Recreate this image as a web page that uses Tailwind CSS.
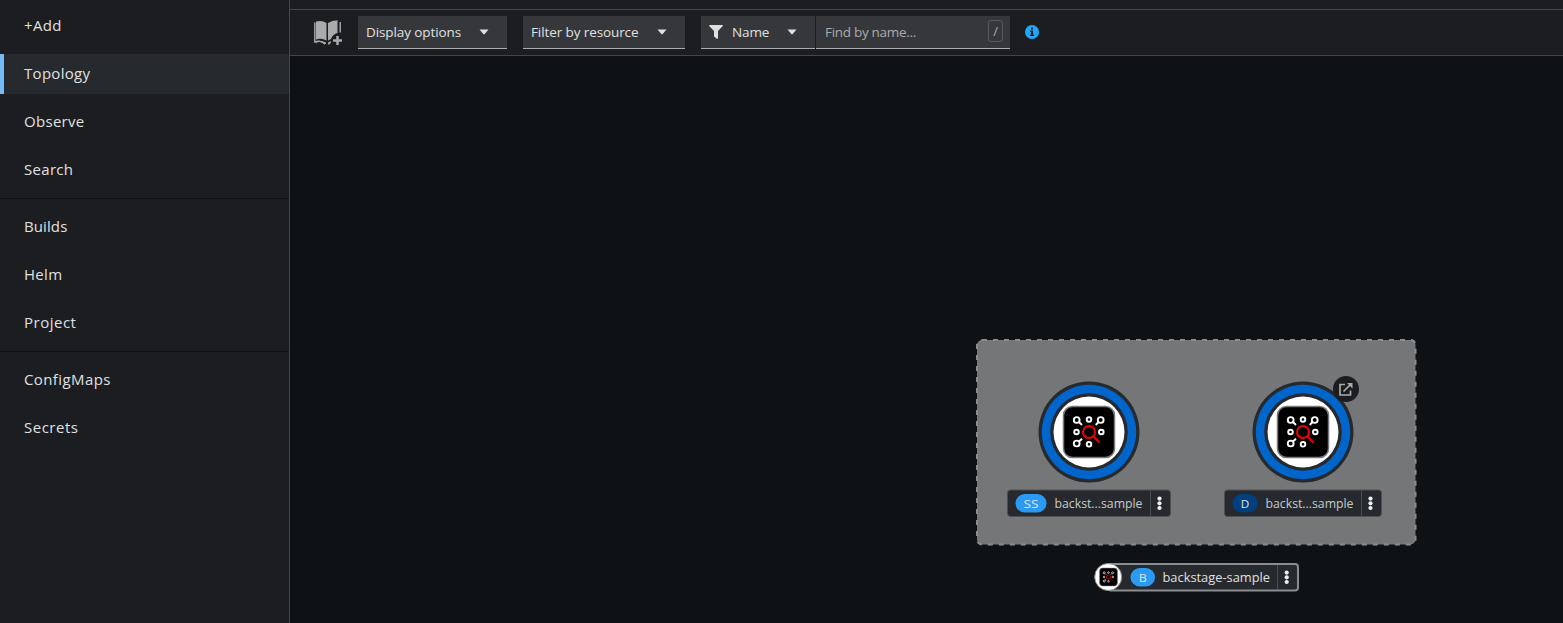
<!DOCTYPE html>
<html lang="en">
<head>
<meta charset="utf-8">
<title>Topology</title>
<script src="https://cdn.jsdelivr.net/npm/@tailwindcss/browser@4"></script>
</head>
<body class="flex h-[623px] w-[1563px] overflow-hidden bg-[#0f1214] font-['Open_Sans','Noto_Sans',sans-serif] text-[#e0e0e0]">
<nav class="flex w-[290px] shrink-0 flex-col border-r border-[#444548] bg-[#1b1d21] text-[15px] leading-[39px] tracking-[0.3px]">
  <div class="flex flex-col gap-2 pt-1.5 pb-2">
    <a class="h-10 pl-6">+Add</a>
    <a class="h-10 border-l-4 border-[#73bcf7] bg-[#26292d] pl-5">Topology</a>
    <a class="h-10 pl-6">Observe</a>
    <a class="h-10 pl-6">Search</a>
  </div>
  <div class="flex flex-col gap-2 border-t border-[#0f1214] py-2">
    <a class="h-10 pl-6 tracking-[0.1px]">Builds</a>
    <a class="h-10 pl-6">Helm</a>
    <a class="h-10 pl-6 tracking-[0.5px]">Project</a>
  </div>
  <div class="flex flex-col gap-2 border-t border-[#0f1214] py-2">
    <a class="h-10 pl-6 tracking-[0.4px]">ConfigMaps</a>
    <a class="h-10 pl-6 tracking-[0.5px]">Secrets</a>
  </div>
</nav>
<main class="flex min-w-0 flex-1 flex-col">
  <div class="h-[9px] shrink-0 bg-[#1b1d21]"></div>
  <div class="flex h-[47px] shrink-0 items-start border-y border-[#444548] bg-[#1b1d21] pt-1.5 pl-6 text-[13.5px] leading-8 tracking-[-0.1px]">
    <svg class="mt-1 w-[29px] shrink-0" height="26" viewBox="314 20 29 26" fill="#aaabac">
      <path d="M316 21.5Q322 19.800 326.500 23V40.500Q322 37.800 316 39.500ZM328 23Q332 20.500 337.500 20.300V33Q333 34 331 39L328 40.500Z"/>
      <path d="M314.800 22.500V42Q320 39.500 325 44M340.200 22V32.500" fill="none" stroke="#aaabac" stroke-width="1.400"/>
      <path d="M316 43.500Q318 41 321 42Q325 44.500 326 44V42.500Q321 39.800 316.500 41ZM328 42.500L331 41L330.500 43.500L328.500 45Z"/>
      <path d="M337.500 36v9M333 40.500h9" stroke="#aaabac" stroke-width="2.500"/>
    </svg>
    <div class="ml-[15px] flex h-[33px] w-[149px] items-center justify-between border-b border-[#aaabac] bg-[#36373a] pr-[18px] pl-2">
      <span>Display options</span><svg width="10" height="6" viewBox="0 0 10 6" fill="#e0e0e0"><path d="M.5.500h9L5.500 5.300h-1z"/></svg>
    </div>
    <div class="ml-4 flex h-[33px] w-[162px] items-center justify-between border-b border-[#aaabac] bg-[#36373a] pr-[18px] pl-2">
      <span>Filter by resource</span><svg width="10" height="6" viewBox="0 0 10 6" fill="#e0e0e0"><path d="M.5.500h9L5.500 5.300h-1z"/></svg>
    </div>
    <div class="ml-4 flex h-[33px] w-[114px] items-center border-b border-[#aaabac] bg-[#36373a] pr-[18px] pl-2">
      <svg width="14" height="14" viewBox="0 0 14 14" fill="#e0e0e0"><path d="M.7 0h12.600q1 .4.300 1.200L9 6v7.200q-.4 1-1.200.5L5 11.500V6L.4 1.200Q-.3.400.7 0z"/></svg>
      <span class="ml-[9px] flex-1">Name</span><svg width="10" height="6" viewBox="0 0 10 6" fill="#e0e0e0"><path d="M.5.500h9L5.500 5.300h-1z"/></svg>
    </div>
    <div class="ml-px flex h-[33px] w-[194px] items-center justify-between border-b border-[#aaabac] bg-[#36373a] pr-[7px] pl-[9px] text-[#aaabac]">
      <span class="tracking-[-0.3px]">Find by name...</span><span class="mb-0.5 flex h-[22px] w-[15px] items-center justify-center rounded-[3px] border border-[#57585b] text-[13px]">/</span>
    </div>
    <svg class="mt-[9px] ml-[15px]" width="14" height="14" viewBox="0 0 14 14"><circle cx="7" cy="7" r="7" fill="#1fa7f8"/><path d="M6 2.500h2v2H6zM5.200 5.600H8v4h.9V11H5.200V9.600H6V7h-.8z" fill="#1b1d21"/></svg>
  </div>
  <svg class="block" width="1273" height="567" viewBox="290 56 1273 567" font-size="13.500" fill="#e0e0e0">
    <defs>
      <g id="logo">
        <rect x="-25.500" y="-25.500" width="51" height="51" rx="9" fill="#000" stroke="#77797b" stroke-width="1.500"/>
        <g fill="none" stroke="#fff" stroke-width="1.900">
          <circle cx="-12.300" cy="-12" r="2.900"/><circle cx="0" cy="-12.500" r="2.300"/><circle cx="11.700" cy="-12" r="2.900"/>
          <circle cx="-12.500" cy="0" r="2.300"/><circle cx="12.300" cy="0" r="2.300"/>
          <circle cx="-12.300" cy="11.500" r="2.900"/><circle cx="0" cy="12.300" r="2.300"/>
          <path d="M-10 -10L-7 -7M9.500 -10L6.700 -7M-10 9.500L-7 6.700"/>
        </g>
        <g fill="none" stroke="#e00" stroke-width="2"><circle cx="0" cy="0" r="6"/><path d="M4.300 4.300L10.500 10.500"/></g>
      </g>
      <g id="node">
        <circle r="50.500" fill="#26292d"/><circle r="47.200" fill="#06c"/><circle r="38.800" fill="#26292d"/><circle r="35.500" fill="#fff"/>
        <use href="#logo"/>
      </g>
      <g id="kebab" fill="#f0f0f0"><circle cy="-4.700" r="2.100"/><circle r="2.100"/><circle cy="4.700" r="2.100"/></g>
    </defs>
    <rect x="977" y="340" width="438.500" height="204.500" rx="5" fill="#757678"/>
    <rect x="977" y="340" width="438.500" height="204.500" rx="5" fill="none" stroke="#8a8d90" stroke-width="2" stroke-dasharray="5 6"/>
    <use href="#node" x="1089" y="432"/>
    <use href="#node" x="1303" y="432"/>
    <circle cx="1346" cy="389" r="13" fill="#1b1d21"/>
    <path d="M1345 384.500h-5v10.500h10.500v-4.500M1343.500 391.500L1351 384" fill="none" stroke="#aaabac" stroke-width="1.700"/><path d="M1347 383h5.500v5.500z" fill="#aaabac"/>

    <rect x="1007.500" y="490" width="163" height="26.500" rx="3" fill="#26292d" stroke="#4f5255"/>
    <path d="M1150.500 490.500v25.500" stroke="#4a4c50"/>
    <rect x="1015.500" y="494" width="31" height="18.500" rx="9.200" fill="#2b9af3"/>
    <text x="1023.500" y="507.500" font-size="11.500" textLength="15" lengthAdjust="spacingAndGlyphs">SS</text>
    <text x="1054.500" y="508" fill="#c8c9ca" textLength="88" lengthAdjust="spacingAndGlyphs">backst...sample</text>
    <use href="#kebab" x="1159.500" y="503.300"/>

    <rect x="1224.500" y="490" width="157" height="26.500" rx="3" fill="#26292d" stroke="#4f5255"/>
    <path d="M1361.500 490.500v25.500" stroke="#4a4c50"/>
    <rect x="1232.500" y="494" width="25" height="18.500" rx="9.200" fill="#004080"/>
    <text x="1240.700" y="507.500" font-size="11.500" textLength="8.500" lengthAdjust="spacingAndGlyphs">D</text>
    <text x="1265.500" y="508" fill="#c8c9ca" textLength="88" lengthAdjust="spacingAndGlyphs">backst...sample</text>
    <use href="#kebab" x="1370.500" y="503.300"/>

    <rect x="1108" y="564" width="190" height="26.500" rx="3" fill="#26292d" stroke="#8a8d90" stroke-width="2"/>
    <path d="M1277.500 565v24.500" stroke="#4a4c50"/>
    <circle cx="1108.200" cy="577" r="13.500" fill="#fff" stroke="#8a8d90"/>
    <use href="#logo" transform="translate(1108.500 577) scale(.350)"/>
    <rect x="1130.500" y="568" width="24.500" height="18.500" rx="9.200" fill="#2b9af3"/>
    <text x="1138.800" y="581.500" font-size="11.500" textLength="8" lengthAdjust="spacingAndGlyphs">B</text>
    <text x="1162.500" y="582" textLength="107.500" lengthAdjust="spacingAndGlyphs">backstage-sample</text>
    <use href="#kebab" x="1286.700" y="577.300"/>
  </svg>
</main>
</body>
</html>
